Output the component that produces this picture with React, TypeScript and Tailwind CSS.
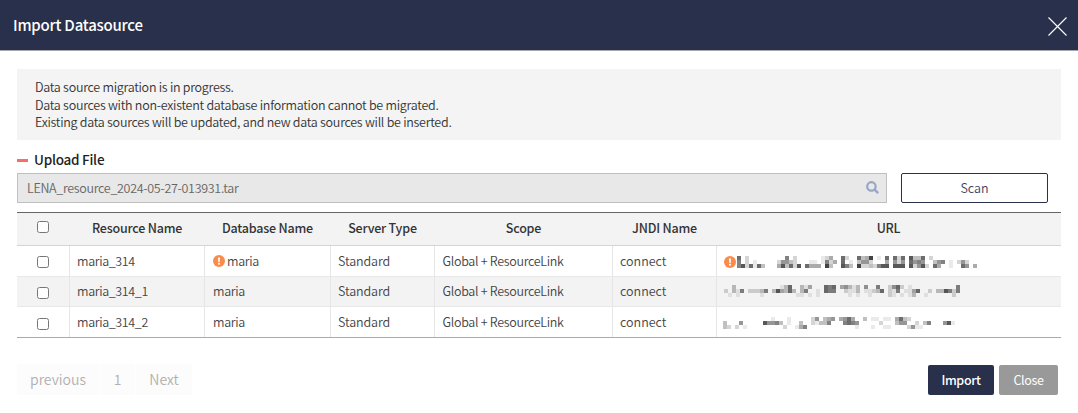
import React from "react";

// Each token is one column of a masked value: darkness (0-9) of its three cells, top to bottom.
const MASKS = [
  "766 008 222 007 011 007 003 000 000 000 024 058 653 037 222 008 000 007 014 014 004 110 269 423 040 000 778 206 013 000 739 352 452 923 002 106 008 748 000 758 228 758 000 878 352 365 758 002 200 037 054 060 000 011 000 020 057 025 000 004",
  "020 001 330 011 060 000 020 020 020 031 060 000 030 080 140 330 770 030 001 331 160 401 000 011 000 770 660 760 000 400 520 311 110 331 000 510 011 020 630 070 000 222 511 760 201 010 111 043 070 000 001 020 000 030 030 080 060 022 660",
  "033 002 000 002 050 001 000 000 000 000 080 050 150 060 030 002 110 000 001 034 006 000 220 510 030 330 460 500 000 400 560 770 460 051 000 300 000 101 100 020 101 101 000 430 750 350 202 005 021 001 030 060 000 000 000 050 080 010",
];

const ROWS = [
  { name: "maria_314", warn: true, height: "h-[31px]", check: "pt-[10px]", url: "pl-[7px] pt-[10px]" },
  { name: "maria_314_1", warn: false, height: "h-[30px]", check: "pt-[10px]", url: "pl-[7px] pt-[8px]" },
  { name: "maria_314_2", warn: false, height: "h-[30px]", check: "pt-[11px]", url: "pl-[6px] pt-[10px]" },
];

const COLS = "grid grid-cols-[53px_135px_126px_104px_178px_104px_344px]";
const HEADS = ["Resource Name", "Database Name", "Server Type", "Scope", "JNDI Name", "URL"];

function Warn() {
  return (
    <svg className="size-3 shrink-0" viewBox="0 0 12 12">
      <circle cx="6" cy="6" r="6" fill="#fb8b4b" />
      <path d="M5 2.4h2L6.7 6.9H5.3Z" fill="#fff" />
      <rect x="5.1" y="7.8" width="1.8" height="1.8" fill="#fff" />
    </svg>
  );
}

function Mask({ data }: { data: string }) {
  return (
    <svg className="shrink-0" width="240" height="12" shapeRendering="crispEdges">
      {data.split(" ").map((col, i) =>
        col.split("").map((v, j) =>
          v === "0" ? null : (
            <rect key={`${i}-${j}`} x={i * 4} y={j * 4} width="4" height="4" fill="#000" fillOpacity={Number(v) * 0.082} />
          ),
        ),
      )}
    </svg>
  );
}

function Check() {
  return <input type="checkbox" className="m-0 block size-[12px]" />;
}

export default function App() {
  return (
    <div className="flex h-[413px] w-[1078px] flex-col bg-white font-['Noto_Sans_CJK_KR','Noto_Sans',sans-serif] text-[13px] text-[#555]">
      <header className="flex h-[51px] shrink-0 items-center justify-between border-b border-[#a5a6aa] bg-[#28304b] pl-[13px] pr-[11px]">
        <h1 className="text-[15px] font-medium leading-5 tracking-[-0.22px] text-white">Import Datasource</h1>
        <svg className="mt-[3px] size-[19px]" viewBox="0 0 19 19" stroke="#fff" strokeWidth="1.1">
          <path d="M.5.5l18 18M18.5.5l-18 18" />
        </svg>
      </header>

      <main className="flex flex-col px-[17px] pt-[18px]">
        <div className="h-[71px] bg-[#f4f4f4] pl-[18px] pt-[9px] text-[12.5px] font-[350] leading-[17.5px] tracking-[-0.26px] text-[#333]">
          <p>Data source migration is in progress.</p>
          <p>Data sources with non-existent database information cannot be migrated.</p>
          <p>Existing data sources will be updated, and new data sources will be inserted.</p>
        </div>

        <div className="mt-[10px] flex h-[20px] items-center">
          <span className="h-[3px] w-[11px] bg-[#f76c6c]" />
          <h2 className="ml-[6px] pb-[2px] text-[13.5px] font-medium leading-5 tracking-[-0.25px] text-[#222]">Upload File</h2>
        </div>

        <div className="mt-[3px] flex h-[30px]">
          <div className="flex w-[870px] items-center justify-between border border-[#bfbfbf] bg-[#e8e8e8] pl-[9px] pr-[7px] text-[12.5px] font-[350] tracking-[-0.3px] text-[#666]">
            <span>LENA_resource_2024-05-27-013931.tar</span>
            <svg className="mb-[2px] size-[13px]" viewBox="0 0 12 12" fill="none" stroke="#98a5c3">
              <circle cx="5" cy="5" r="3.9" strokeWidth="2" />
              <path d="M8 8l3.2 3.2" strokeWidth="2.2" />
            </svg>
          </div>
          <button className="ml-[14px] w-[147px] rounded-[2px] border border-[#28304b] bg-white text-[12.5px] font-[350] text-[#3b4260]">Scan</button>
        </div>

        <div className="mt-[9px] w-[1044px] border-b border-t border-b-[#aaa] border-t-[#666]">
          <div className={`${COLS} h-[33px] border-b border-[#d4d4d4] bg-[#f3f3f3] font-medium text-[#333]`}>
            <div className="pl-[20px] pt-[8px]"><Check /></div>
            {HEADS.map((h) => (
              <div key={h} className="flex items-center justify-center pb-[2px] pr-px text-[12.5px] tracking-[-0.2px]">{h}</div>
            ))}
          </div>
          {ROWS.map((r, i) => (
            <div
              key={r.name}
              className={`${COLS} ${r.height} divide-x divide-[#e6e6e6] text-[12.5px] font-[350] tracking-[-0.33px] text-[#444] ${i === 1 ? "bg-[#f3f3f3]" : "bg-white"} ${i < 2 ? "border-b border-[#e8e8e8]" : ""}`}
            >
              <div className={`pl-[20px] ${r.check}`}><Check /></div>
              <div className="flex items-center pl-[7px] tracking-[-0.36px]">{r.name}</div>
              <div className="flex items-center gap-[2px] pl-[8px]">{r.warn && <Warn />}maria</div>
              <div className="flex items-center pl-[7px] tracking-[-0.1px]">Standard</div>
              <div className="flex items-center pl-[7.5px] tracking-[-0.3px]">Global + ResourceLink</div>
              <div className="flex items-center pl-[7px] tracking-normal">connect</div>
              <div className={`flex items-start gap-px ${r.url}`}>
                {r.warn && <Warn />}
                <Mask data={MASKS[i]} />
              </div>
            </div>
          ))}
        </div>

        <footer className="mt-[26px] flex items-start justify-between">
          <div className="flex gap-px text-[14px] font-[350] leading-[31px] text-[#b0b0b0]">
            <span className="w-[82px] bg-[#fcfcfc] text-center">previous</span>
            <span className="w-[35px] bg-[#fcfcfc] text-center">1</span>
            <span className="w-[56px] bg-[#fcfcfc] text-center">Next</span>
          </div>
          <div className="mr-[3px] mt-px flex gap-[5px] text-[12.5px] tracking-[-0.35px] text-white">
            <button className="h-[30px] w-[66px] rounded-[2px] bg-[#28304b] font-medium">Import</button>
            <button className="h-[30px] w-[59px] rounded-[2px] bg-[#999]">Close</button>
          </div>
        </footer>
      </main>
    </div>
  );
}
